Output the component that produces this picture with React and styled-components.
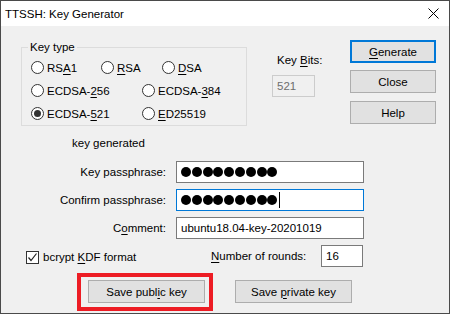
import React from 'react';
import styled, { createGlobalStyle } from 'styled-components';

const GlobalStyle = createGlobalStyle`
  html, body {
    margin: 0;
    padding: 0;
    background: #ffffff;
  }
  * {
    box-sizing: border-box;
  }
`;

const Window = styled.div`
  width: 450px;
  height: 314px;
  border: 1px solid #4a4a4a;
  display: flex;
  flex-direction: column;
  font-family: "Liberation Sans", Arial, sans-serif;
  font-size: 11.5px;
  color: #000;
  overflow: hidden;
`;

const TitleBar = styled.div`
  height: 25px;
  background: #ffffff;
  display: flex;
  align-items: center;
  justify-content: space-between;
  padding: 0 10px 0 4px;
  flex-shrink: 0;
`;

const Title = styled.div`
  font-size: 11.5px;
  line-height: 16px;
`;

const Body = styled.div`
  flex: 1;
  background: #f0f0f0;
  display: flex;
  flex-direction: column;
`;

const TopRow = styled.div`
  height: 100px;
  display: flex;
  align-items: flex-start;
  padding-left: 20px;
`;

const GroupBox = styled.fieldset`
  margin: 13px 0 0 0;
  padding: 1px 0 0 0;
  width: 226px;
  border: 1px solid #dcdcdc;
  min-width: 0;
`;

const Legend = styled.legend`
  margin-left: 6px;
  padding: 0 2px;
  line-height: 16px;
`;

const RadioRow = styled.div`
  height: 23px;
  display: flex;
  align-items: center;
  padding-left: 9px;
`;

const RadioItem = styled.label`
  display: flex;
  align-items: center;
  gap: 3px;
  width: ${p => (p.$w ? `${p.$w}px` : 'auto')};
  white-space: nowrap;
`;

const RadioCircle = styled.span`
  width: 13px;
  height: 13px;
  border-radius: 50%;
  border: 1px solid #333;
  background: #fff;
  display: flex;
  align-items: center;
  justify-content: center;
  flex-shrink: 0;
  &::after {
    content: '';
    width: 7px;
    height: 7px;
    border-radius: 50%;
    background: ${p => (p.$checked ? '#333' : 'transparent')};
  }
`;

const U = styled.span`
  text-decoration: underline;
  text-underline-offset: 2px;
`;

const BitsColumn = styled.div`
  margin: 26px 0 0 25px;
  width: 78px;
  display: flex;
  flex-direction: column;
`;

const BitsLabel = styled.div`
  line-height: 16px;
  padding-left: 5px;
`;

const DisabledBox = styled.div`
  margin-top: 7px;
  width: 43px;
  height: 22px;
  border: 1px solid #cccccc;
  color: #6d6d6d;
  display: flex;
  align-items: center;
  padding-left: 4px;
`;

const ButtonColumn = styled.div`
  margin-top: 14px;
  display: flex;
  flex-direction: column;
  gap: 7px;
`;

const Button = styled.div`
  width: ${p => p.$w || 86}px;
  height: 23px;
  background: #e1e1e1;
  border: ${p => (p.$default ? '2px solid #0078d7' : '1px solid #adadad')};
  display: flex;
  align-items: center;
  justify-content: center;
  white-space: nowrap;
  margin-top: ${p => p.$mt || 0}px;
  margin-left: ${p => p.$ml || 0}px;
`;

const Status = styled.div`
  margin-top: 9px;
  padding-left: 71px;
  line-height: 16px;
`;

const Form = styled.div`
  margin-top: 10px;
  display: grid;
  grid-template-columns: 165px 188px;
  grid-auto-rows: 22px;
  column-gap: 10px;
  row-gap: 6px;
`;

const FieldLabel = styled.div`
  display: flex;
  align-items: center;
  justify-content: flex-end;
  white-space: nowrap;
`;

const TextBox = styled.div`
  height: 22px;
  width: ${p => (p.$w ? `${p.$w}px` : '100%')};
  background: #fff;
  border: 1px solid ${p => (p.$focused ? '#0078d7' : '#7a7a7a')};
  display: flex;
  align-items: center;
  padding-left: 4px;
  white-space: nowrap;
  overflow: hidden;
`;

const Dot = styled.span`
  width: 10px;
  height: 10px;
  border-radius: 50%;
  background: #000;
  margin-right: 0.8px;
  flex-shrink: 0;
`;

const Caret = styled.span`
  width: 1px;
  height: 16px;
  background: #000;
  margin-left: 0.5px;
`;

const OptionsRow = styled.div`
  margin-top: 6px;
  height: 22px;
  display: flex;
  align-items: center;
  padding-left: 25px;
`;

const CheckItem = styled.div`
  width: 185px;
  display: flex;
  align-items: center;
  gap: 4px;
  padding-top: 2px;
`;

const CheckBox = styled.span`
  width: 13px;
  height: 13px;
  border: 1px solid #333;
  background: #fff;
  display: flex;
  align-items: center;
  justify-content: center;
`;

const RoundsLabel = styled.div`
  width: 110px;
  white-space: nowrap;
`;

const BottomRow = styled.div`
  margin-top: 6px;
  display: flex;
  align-items: flex-start;
  padding-left: 76px;
`;

const Highlight = styled.div`
  border: 4px solid #ed1c24;
  padding: 3px 4px 4px 7px;
`;

const CloseIcon = () => (
  <svg width="11" height="11" viewBox="0 0 11 11">
    <path d="M0.5 0.5 L10.5 10.5 M10.5 0.5 L0.5 10.5" stroke="#000" strokeWidth="1" fill="none" />
  </svg>
);

const CheckMark = () => (
  <svg width="11" height="11" viewBox="0 0 11 11">
    <path d="M1.5 5.5 L4 8.5 L9.5 1.5" stroke="#222" strokeWidth="1.2" fill="none" />
  </svg>
);

const Radio = ({ w, checked, children }) => (
  <RadioItem $w={w}>
    <RadioCircle $checked={checked} />
    <span>{children}</span>
  </RadioItem>
);

const Dots = ({ n }) => Array.from({ length: n }, (_, i) => <Dot key={i} />);

export default function App() {
  return (
    <>
      <GlobalStyle />
      <Window>
        <TitleBar>
          <Title>TTSSH: Key Generator</Title>
          <CloseIcon />
        </TitleBar>
        <Body>
          <TopRow>
            <GroupBox>
              <Legend>Key type</Legend>
              <RadioRow>
                <Radio w={70}>RS<U>A</U>1</Radio>
                <Radio w={61}><U>R</U>SA</Radio>
                <Radio><U>D</U>SA</Radio>
              </RadioRow>
              <RadioRow>
                <Radio w={111}>ECDSA-<U>2</U>56</Radio>
                <Radio>ECDSA-<U>3</U>84</Radio>
              </RadioRow>
              <RadioRow>
                <Radio w={111} checked>ECDSA-<U>5</U>21</Radio>
                <Radio><U>E</U>D25519</Radio>
              </RadioRow>
            </GroupBox>
            <BitsColumn>
              <BitsLabel>Key <U>B</U>its:</BitsLabel>
              <DisabledBox>521</DisabledBox>
            </BitsColumn>
            <ButtonColumn>
              <Button $default><span><U>G</U>enerate</span></Button>
              <Button>Close</Button>
              <Button $mt={1}>Help</Button>
            </ButtonColumn>
          </TopRow>
          <Status>key generated</Status>
          <Form>
            <FieldLabel>Key passphrase:</FieldLabel>
            <TextBox><Dots n={9} /></TextBox>
            <FieldLabel>Confirm passphrase:</FieldLabel>
            <TextBox $focused><Dots n={9} /><Caret /></TextBox>
            <FieldLabel><span>C<U>o</U>mment:</span></FieldLabel>
            <TextBox>ubuntu18.04-key-20201019</TextBox>
          </Form>
          <OptionsRow>
            <CheckItem>
              <CheckBox><CheckMark /></CheckBox>
              <span>bcrypt <U>K</U>DF format</span>
            </CheckItem>
            <RoundsLabel><U>N</U>umber of rounds:</RoundsLabel>
            <TextBox $w={42}>16</TextBox>
          </OptionsRow>
          <BottomRow>
            <Highlight>
              <Button $w={117}><span>Save publ<U>i</U>c key</span></Button>
            </Highlight>
            <Button $w={117} $mt={7} $ml={22}><span>Save <U>p</U>rivate key</span></Button>
          </BottomRow>
        </Body>
      </Window>
    </>
  );
}
